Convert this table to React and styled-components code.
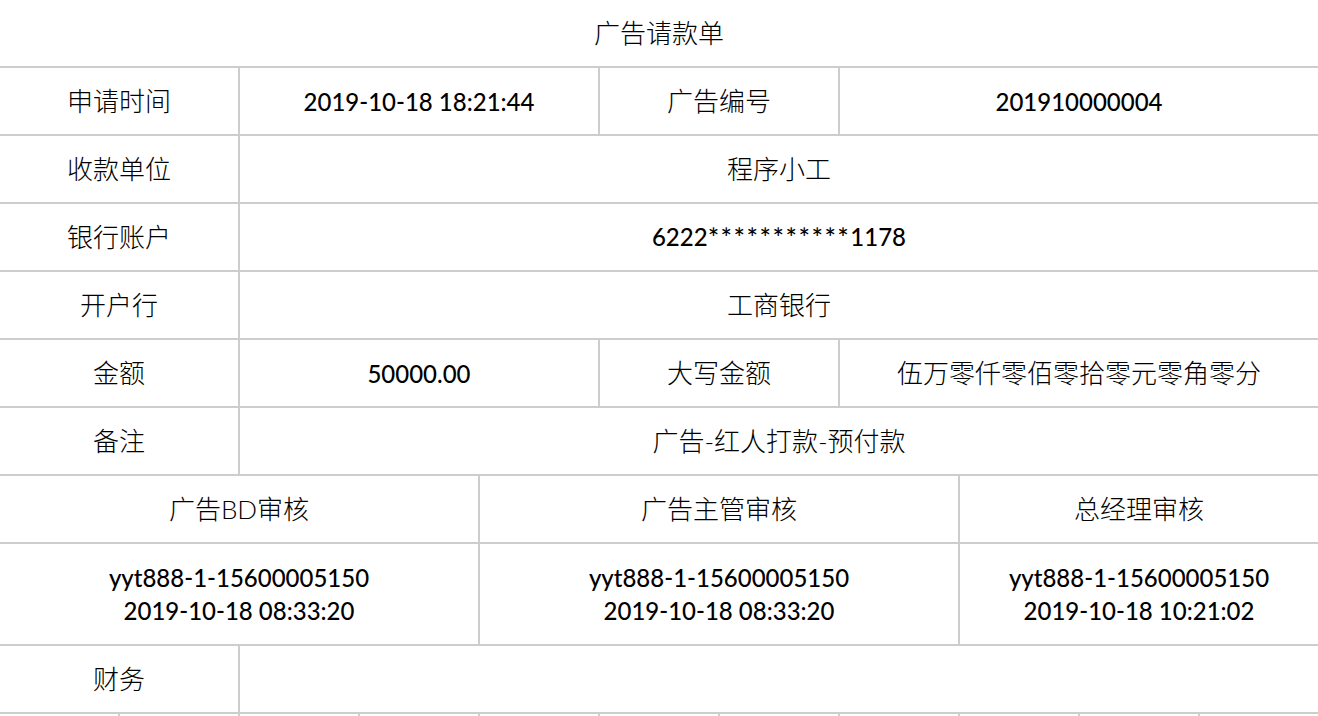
import styled, { createGlobalStyle } from "styled-components";

const GlobalStyle = createGlobalStyle`
    html, body
    {
        margin: 0;
        padding: 0;
        background: #ffffff;
    }
    body
    {
        font-family: Lato, "Noto Sans CJK SC", sans-serif;
        color: #000000;
    }
`

const approvals = [
    { title: "广告BD审核", span: 4, user: "yyt888-1-15600005150", time: "2019-10-18 08:33:20" },
    { title: "广告主管审核", span: 4, user: "yyt888-1-15600005150", time: "2019-10-18 08:33:20" },
    { title: "总经理审核", span: 3, user: "yyt888-1-15600005150", time: "2019-10-18 10:21:02" },
];

const App = () =>
{
    return(
        <>
            <GlobalStyle />
            <Sheet>
                <Cell $span={11}>广告请款单</Cell>

                <Cell $span={2}>申请时间</Cell>
                <Cell $span={3} $latin>2019-10-18 18:21:44</Cell>
                <Cell $span={2}>广告编号</Cell>
                <Cell $span={4} $latin>201910000004</Cell>

                <Cell $span={2}>收款单位</Cell>
                <Cell $span={9}>程序小工</Cell>

                <Cell $span={2}>银行账户</Cell>
                <Cell $span={9} $latin>
                    <TextLine>6222<Stars>***********</Stars>1178</TextLine>
                </Cell>

                <Cell $span={2}>开户行</Cell>
                <Cell $span={9}>工商银行</Cell>

                <Cell $span={2}>金额</Cell>
                <Cell $span={3} $latin>50000.00</Cell>
                <Cell $span={2}>大写金额</Cell>
                <Cell $span={4}>伍万零仟零佰零拾零元零角零分</Cell>

                <Cell $span={2}>备注</Cell>
                <Cell $span={9}>广告-红人打款-预付款</Cell>

                {approvals.map((a) => (
                    <Cell key={a.title} $span={a.span}>{a.title}</Cell>
                ))}
                {approvals.map((a) => (
                    <Cell key={a.title + "-sign"} $span={a.span} $tall $latin>
                        <TextLine>{a.user}</TextLine>
                        <TextLine>{a.time}</TextLine>
                    </Cell>
                ))}

                <Cell $span={2}>财务</Cell>
                <Cell $span={9}></Cell>

                {Array.from({ length: 11 }).map((_, i) => (
                    <Cell key={"blank" + i} $span={1}></Cell>
                ))}
            </Sheet>
        </>
    );
}

export default App;

const Sheet = styled.div
`
    width: 1318px;
    display: grid;
    grid-template-columns: repeat(11, 1fr);
    grid-auto-rows: minmax(66px, auto);
    gap: 2px;
    background: #cdcdcd;
`

const Cell = styled.div
`
    grid-column: span ${(props) => props.$span};
    min-height: ${(props) => (props.$tall ? "100px" : "66px")};
    background: #ffffff;
    display: flex;
    flex-direction: column;
    align-items: center;
    justify-content: center;
    text-align: center;
    font-size: ${(props) => (props.$latin ? "24px" : "26px")};
    font-weight: ${(props) => (props.$latin ? 500 : 300)};
    line-height: 33px;
    white-space: nowrap;
`

const Stars = styled.span
`
    font-size: 27px;
    letter-spacing: 1.5px;
    vertical-align: -2px;
`

const TextLine = styled.span
`
    display: block;
    line-height: 33px;
`
